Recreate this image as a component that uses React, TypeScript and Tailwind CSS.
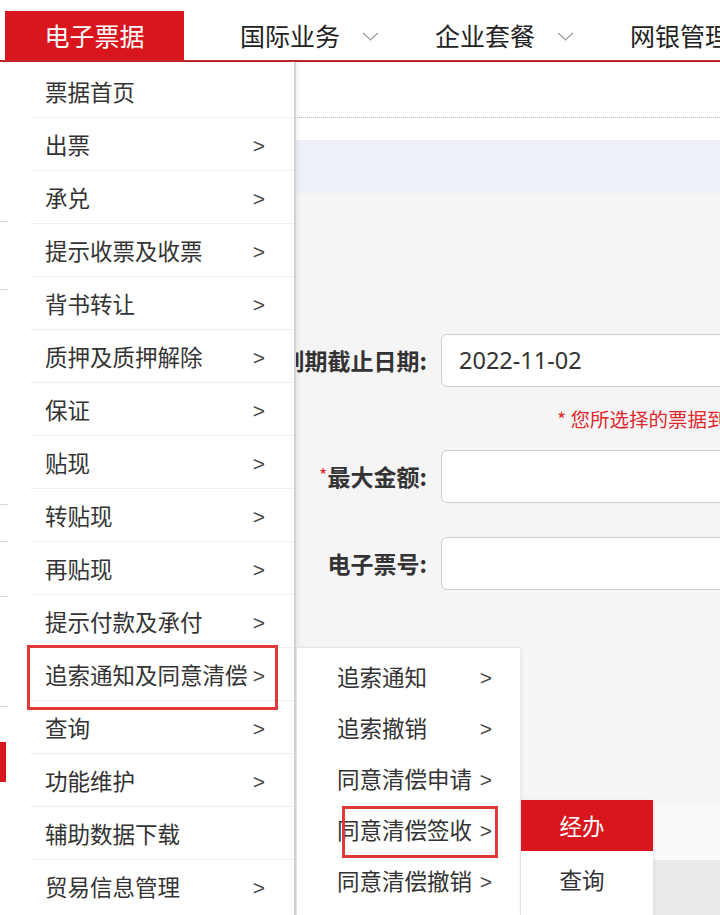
import React from "react";

const cjk = "font-['Microsoft_YaHei','Noto_Sans_CJK_SC',sans-serif]";

// main menu under 电子票据
const mainMenu: { label: string; sub: boolean }[] = [
  { label: "票据首页", sub: false },
  { label: "出票", sub: true },
  { label: "承兑", sub: true },
  { label: "提示收票及收票", sub: true },
  { label: "背书转让", sub: true },
  { label: "质押及质押解除", sub: true },
  { label: "保证", sub: true },
  { label: "贴现", sub: true },
  { label: "转贴现", sub: true },
  { label: "再贴现", sub: true },
  { label: "提示付款及承付", sub: true },
  { label: "追索通知及同意清偿", sub: true },
  { label: "查询", sub: true },
  { label: "功能维护", sub: true },
  { label: "辅助数据下载", sub: false },
  { label: "贸易信息管理", sub: true },
];

const subMenu = ["追索通知", "追索撤销", "同意清偿申请", "同意清偿签收", "同意清偿撤销"];

const Chevron = () => (
  <svg width="17" height="10" viewBox="0 0 17 10" className="ml-[22px] mt-[2px] shrink-0">
    <polyline points="1,1 8.5,8 16,1" fill="none" stroke="#9a9a9a" strokeWidth="1.2" />
  </svg>
);

const NavTab = ({ label, arrow }: { label: string; arrow?: boolean }) => (
  <div className="flex items-center h-full pt-[11px] pl-[56px] shrink-0 whitespace-nowrap">
    <span className="text-[25px] text-[#222] leading-none">{label}</span>
    {arrow && <Chevron />}
  </div>
);

const Arrow = () => (
  <span className="font-['Liberation_Sans',sans-serif] text-[21px] leading-none text-[#444] mt-[2px]">&gt;</span>
);

const FormRow = ({ label, required, value }: { label: string; required?: boolean; value?: string }) => (
  <div className="flex items-center">
    <div className="w-[419px] shrink-0 text-right text-[23px] font-bold text-[#333] leading-none whitespace-nowrap">
      {required && <span className="text-[#e0282e] font-normal text-[18px] align-top">*</span>}
      {label}
    </div>
    <div className="ml-[14px] w-[360px] shrink-0 h-[53px] bg-white border border-[#cfcfcf] rounded-md flex items-center pl-[17px]">
      {value && <span className="font-['Noto_Sans',sans-serif] text-[23.5px] text-[#333]">{value}</span>}
    </div>
  </div>
);

export default function App() {
  return (
    <div className={`relative w-[720px] h-[915px] overflow-hidden bg-[#f5f5f5] ${cjk}`}>
      {/* header */}
      <div className="h-[62px] bg-white border-b-2 border-[#c0272d] flex overflow-hidden">
        <div className="ml-[5px] mt-[11px] w-[179px] h-[49px] shrink-0 bg-[#d9161e] flex items-center justify-center">
          <span className="text-white text-[25px] leading-none">电子票据</span>
        </div>
        <NavTab label="国际业务" arrow />
        <NavTab label="企业套餐" arrow />
        <NavTab label="网银管理" />
      </div>

      {/* page body behind the menus */}
      <div className="flex">
        <div className="w-[8px] shrink-0 bg-white flex flex-col">
          <div className="h-[160px] border-b border-[#d8d8d8]" />
          <div className="h-[68px] border-b border-[#d8d8d8]" />
          <div className="h-[215px] border-b border-[#d8d8d8]" />
          <div className="h-[37px] border-b border-[#d8d8d8]" />
          <div className="h-[55px] border-b border-[#d8d8d8]" />
          <div className="h-[110px] border-b border-[#d8d8d8]" />
          <div className="h-[40px] mt-[35px] w-[6px] bg-[#d9161e]" />
        </div>
        <div className="flex-1 flex flex-col overflow-hidden">
          <div className="h-[56px] bg-white border-b border-dotted border-[#b5b5b5]" />
          <div className="h-[22px] bg-white" />
          <div className="h-[53px] bg-[#edf0f7]" />
          <div className="pt-[141px] flex flex-col">
            <FormRow label="到期截止日期:" value="2022-11-02" />
            <div className="h-[63px] flex items-center pl-[549px] whitespace-nowrap text-[19.5px] text-[#e0282e]">
              * 您所选择的票据到期日
            </div>
            <FormRow label="最大金额:" required />
            <div className="h-[34px]" />
            <FormRow label="电子票号:" />
            <div className="h-[215px]" />
            <div className="h-[55px] bg-[#fafafa]" />
            <div className="h-[60px] bg-[#ebebeb]" />
          </div>
        </div>
      </div>

      {/* level 1 menu */}
      <div className="absolute left-[8px] top-[62px] w-[288px] h-[853px] bg-white border-r-2 border-[#d4d4d4] pt-[3px] shadow-[2px_0_4px_rgba(0,0,0,0.06)]">
        {mainMenu.map((m, i) => (
          <div key={m.label} className="relative h-[53px] flex items-center justify-between pl-[37px] pr-[29px] text-[22.5px] text-[#333]">
            <span className="leading-none whitespace-nowrap">{m.label}</span>
            {m.sub && <Arrow />}
            {i < mainMenu.length - 1 && (
              <div className="absolute left-[22px] right-0 bottom-0 h-px bg-[#efefef]" />
            )}
          </div>
        ))}
        {/* highlight box */}
        <div className="absolute left-[19px] top-[583px] w-[251px] h-[65px] border-[3px] border-[#e2383a]" />
      </div>

      {/* level 2 menu */}
      <div className="absolute left-[296px] top-[647px] w-[224px] h-[268px] bg-white border-l border-t border-[#e4e4e4] pt-[3px] shadow-[1px_1px_4px_rgba(0,0,0,0.08)]">
        {subMenu.map((s) => (
          <div key={s} className="h-[51px] flex items-center justify-between pl-[40px] pr-[28px] text-[22.5px] text-[#333]">
            <span className="leading-none whitespace-nowrap">{s}</span>
            <Arrow />
          </div>
        ))}
        <div className="absolute left-[45px] top-[158px] w-[156px] h-[52px] border-[3px] border-[#e2383a]" />
      </div>

      {/* level 3 menu */}
      <div className="absolute left-[520px] top-[800px] w-[133px] h-[115px] bg-white border-l border-[#e4e4e4] shadow-[1px_1px_4px_rgba(0,0,0,0.08)]">
        <div className="h-[51px] bg-[#d9161e] flex items-center justify-center pr-[10px] text-white text-[22.5px]">经办</div>
        <div className="h-[58px] flex items-center justify-center pr-[10px] text-[#333] text-[22.5px]">查询</div>
      </div>
    </div>
  );
}
